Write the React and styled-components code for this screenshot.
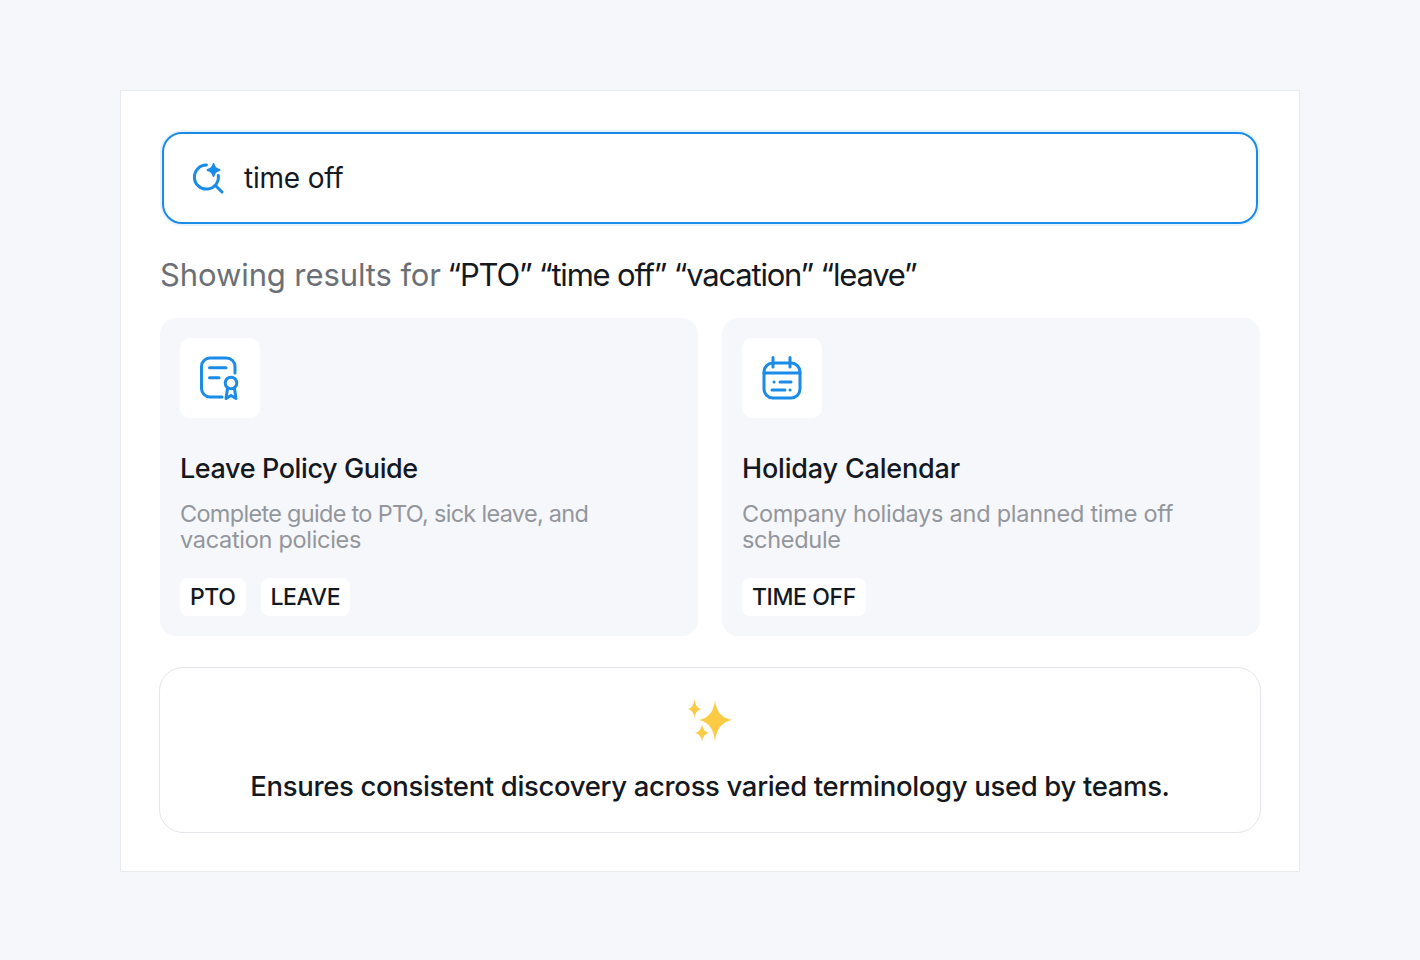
import React from 'react';
import styled, { createGlobalStyle } from 'styled-components';

const GlobalStyle = createGlobalStyle`
  html, body { margin: 0; padding: 0; background: #f6f7fb; }
  * { box-sizing: border-box; }
  body { font-family: Inter, "Noto Sans", sans-serif; }
`;

const Page = styled.div`
  width: 1420px;
  height: 960px;
  padding: 90px 120px 88px;
`;

const Panel = styled.div`
  width: 1180px;
  height: 782px;
  background: #fff;
  border: 1px solid #e8eaef;
  padding: 41px 39px 0;
  display: flex;
  flex-direction: column;
`;

const SearchBox = styled.div`
  height: 92px;
  margin: 0 2px;
  flex: none;
  border: 2px solid #1b8be8;
  border-radius: 20px;
  box-shadow: 0 0 0 2px #e9f3fd;
  display: flex;
  align-items: center;
  gap: 19px;
  padding-left: 27px;
`;

const Query = styled.span`
  font-size: 28px;
  letter-spacing: -0.2px;
  color: #14181f;
`;

const Heading = styled.div`
  margin-top: 31px;
  font-size: 31px;
  line-height: 40px;
  letter-spacing: -0.1px;
  color: #6c7076;
  span { margin-left: -2px; color: #14181f; letter-spacing: -1.2px; }
`;

const Cards = styled.div`
  margin-top: 23px;
  display: grid;
  grid-template-columns: 538px 538px;
  gap: 24px;
`;

const Card = styled.div`
  height: 318px;
  background: #f6f7fb;
  border-radius: 16px;
  padding: 20px;
`;

const IconTile = styled.div`
  width: 80px;
  height: 80px;
  background: #fff;
  border-radius: 10px;
  display: flex;
  align-items: center;
  justify-content: center;
`;

const Title = styled.h3`
  margin: 34px 0 0;
  font-size: 27px;
  line-height: 34px;
  font-weight: 500;
  letter-spacing: ${(p) => p.$spacing};
  color: #14181f;
`;

const Desc = styled.p`
  margin: 15px 0 0;
  font-size: 23.5px;
  line-height: 26px;
  color: #93969c;
`;

const DescLine = styled.span`
  display: block;
  white-space: nowrap;
  letter-spacing: ${(p) => p.$spacing};
`;

const Tags = styled.div`
  margin-top: 25px;
  display: flex;
  gap: 15px;
`;

const Tag = styled.span`
  height: 38px;
  padding: 0 10px;
  background: #fff;
  border-radius: 8px;
  font-size: 23px;
  line-height: 38px;
  font-weight: 500;
  letter-spacing: -0.4px;
  color: #14181f;
`;

const Note = styled.div`
  margin: 31px -1px 0;
  height: 166px;
  flex: none;
  border: 1px solid #e4e6eb;
  border-radius: 24px;
  display: flex;
  flex-direction: column;
  align-items: center;
  padding-top: 29px;
`;

const NoteText = styled.div`
  margin-top: 23px;
  font-size: 27.5px;
  line-height: 36px;
  font-weight: 500;
  letter-spacing: -0.34px;
  color: #14181f;
`;

const SearchIcon = () => (
  <svg width="34" height="34" viewBox="0 0 34 34" fill="none" stroke="#1b8be8" strokeWidth="3" strokeLinecap="round" strokeLinejoin="round">
    <path d="M15.500 4.100A12 12 0 1 0 27.300 14.500" />
    <path d="M24.700 24.700L31 31" />
    <path d="M22.500 3Q23.500 7.800 28.500 9Q23.500 10.200 22.500 15Q21.500 10.200 16.500 9Q21.500 7.800 22.500 3z" fill="#1b8be8" strokeWidth="1.800" />
  </svg>
);

const DocIcon = () => (
  <svg width="42" height="46" viewBox="0 0 42 46" fill="none" stroke="#1b8be8" strokeWidth="3" strokeLinecap="round" strokeLinejoin="round">
    <path d="M23 42H11a8.500 8.500 0 0 1-8.500-8.500V11.500A8.500 8.500 0 0 1 11 3h16.500A8.500 8.500 0 0 1 36 11.500V18" />
    <path d="M10.500 12.700H27M10.500 22.700H20" />
    <circle cx="32" cy="28" r="5.800" />
    <path d="M28.500 33.500L27 43.500L32 40.500L37 43.500L35.500 33.500" />
  </svg>
);

const CalendarIcon = () => (
  <svg width="42" height="46" viewBox="0 0 42 46" fill="none" stroke="#1b8be8" strokeWidth="3" strokeLinecap="round" strokeLinejoin="round">
    <rect x="3" y="8" width="36" height="35" rx="9" />
    <path d="M3 18H39M12 2.500V12M29 2.500V12M19 27H30M11 35H24" />
    <path d="M13 27H13.100M29 35H29.100" />
  </svg>
);

const Sparkles = () => (
  <svg width="48" height="48" viewBox="0 0 48 48" fill="#fbcb45">
    <path d="M29 3Q30.500 20 46 23Q30.500 26 29 45Q27.500 26 13 23Q27.500 20 29 3z" />
    <path d="M8.500 2Q9.300 10.500 15 12Q9.300 13.500 8.500 21Q7.700 13.500 2 12Q7.700 10.500 8.500 2z" />
    <path d="M16 27Q16.800 34.800 23 36Q16.800 37.200 16 45Q15.200 37.200 9 36Q15.200 34.800 16 27z" />
  </svg>
);

export default function App() {
  return (
    <Page>
      <GlobalStyle />
      <Panel>
        <SearchBox>
          <SearchIcon />
          <Query>time off</Query>
        </SearchBox>
        <Heading>
          Showing results for <span>“PTO” “time off” “vacation” “leave”</span>
        </Heading>
        <Cards>
          <Card>
            <IconTile><DocIcon /></IconTile>
            <Title $spacing="-0.4px">Leave Policy Guide</Title>
            <Desc>
              <DescLine $spacing="-0.7px">Complete guide to PTO, sick leave, and</DescLine>
              <DescLine $spacing="-0.3px">vacation policies</DescLine>
            </Desc>
            <Tags>
              <Tag>PTO</Tag>
              <Tag>LEAVE</Tag>
            </Tags>
          </Card>
          <Card>
            <IconTile><CalendarIcon /></IconTile>
            <Title $spacing="-0.18px">Holiday Calendar</Title>
            <Desc>
              <DescLine $spacing="-0.25px">Company holidays and planned time off</DescLine>
              <DescLine $spacing="-0.3px">schedule</DescLine>
            </Desc>
            <Tags>
              <Tag>TIME OFF</Tag>
            </Tags>
          </Card>
        </Cards>
        <Note>
          <Sparkles />
          <NoteText>Ensures consistent discovery across varied terminology used by teams.</NoteText>
        </Note>
      </Panel>
    </Page>
  );
}
